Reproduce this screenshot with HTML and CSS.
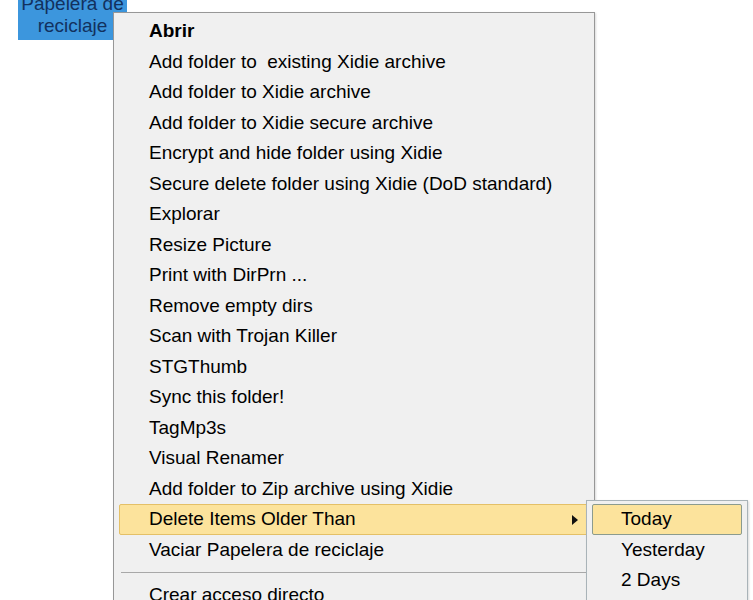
FILE: index.html
```html
<!DOCTYPE html>
<html>
<head>
  <title>Papelera de reciclaje</title>
  <link rel="stylesheet" href="styles.css">
</head>
<body>
  <div class="desktop">
    <div class="icon-label">Papelera de<br>reciclaje</div>

    <ul class="menu">
      <li class="item default">Abrir</li>
      <li class="item">Add folder to &nbsp;existing Xidie archive</li>
      <li class="item">Add folder to Xidie archive</li>
      <li class="item">Add folder to Xidie secure archive</li>
      <li class="item">Encrypt and hide folder using Xidie</li>
      <li class="item">Secure delete folder using Xidie (DoD standard)</li>
      <li class="item">Explorar</li>
      <li class="item">Resize Picture</li>
      <li class="item">Print with DirPrn ...</li>
      <li class="item">Remove empty dirs</li>
      <li class="item">Scan with Trojan Killer</li>
      <li class="item">STGThumb</li>
      <li class="item">Sync this folder!</li>
      <li class="item">TagMp3s</li>
      <li class="item">Visual Renamer</li>
      <li class="item">Add folder to Zip archive using Xidie</li>
      <li class="item active has-sub">Delete Items Older Than <span class="arrow"></span></li>
      <li class="item">Vaciar Papelera de reciclaje</li>
      <li class="sep"></li>
      <li class="item">Crear acceso directo</li>
    </ul>

    <ul class="menu submenu">
      <li class="item active">Today</li>
      <li class="item">Yesterday</li>
      <li class="item">2 Days</li>
      <li class="item">3 Days</li>
    </ul>
  </div>
</body>
</html>
```

FILE: styles.css
```css
body {
  margin: 0;
  background: #fff;
  overflow: hidden;
  font-family: 'Liberation Sans', Arial, sans-serif;
  color: #000;
}

.desktop {
  position: relative;
  width: 753px;
  height: 600px;
}

.icon-label {
  position: absolute;
  left: 18px;
  top: -7px;
  width: 109px;
  padding-bottom: 3px;
  background: #3c96dd;
  color: #12315e;
  text-align: center;
  font-size: 19px;
  line-height: 22px;
}

.menu {
  position: absolute;
  left: 113px;
  top: 12px;
  width: 476px;
  margin: 0;
  padding: 3px 2px;
  list-style: none;
  background: #f0f0f0;
  border: 1px solid #979797;
  box-shadow: 1px 1px 2px rgba(0, 0, 0, 0.15);
}

.item {
  position: relative;
  height: 28.5px;
  line-height: 28.5px;
  padding-left: 29px;
  margin: 0 3px;
  font-size: 19px;
  border: 1px solid transparent;
  border-radius: 2px;
  white-space: nowrap;
}

.item.default {
  font-weight: bold;
}

.item.active {
  background: #fce39c;
  border-color: #e4c067;
}

.arrow {
  position: absolute;
  right: 10px;
  top: 10px;
  width: 0;
  height: 0;
  border-top: 5px solid transparent;
  border-bottom: 5px solid transparent;
  border-left: 6px solid #111;
}

.sep {
  height: 15px;
  margin: 0 3px 0 5px;
  position: relative;
}

.sep::after {
  content: '';
  position: absolute;
  left: 0;
  right: 0;
  top: 7px;
  border-top: 1px solid #a8a8a8;
}

.submenu {
  left: 586px;
  top: 500px;
  width: 156px;
  border-color: #a9b3b8;
}

.submenu .item {
  padding-left: 28px;
}

.submenu .item.active {
  border-color: #8b9b8e;
}
```
